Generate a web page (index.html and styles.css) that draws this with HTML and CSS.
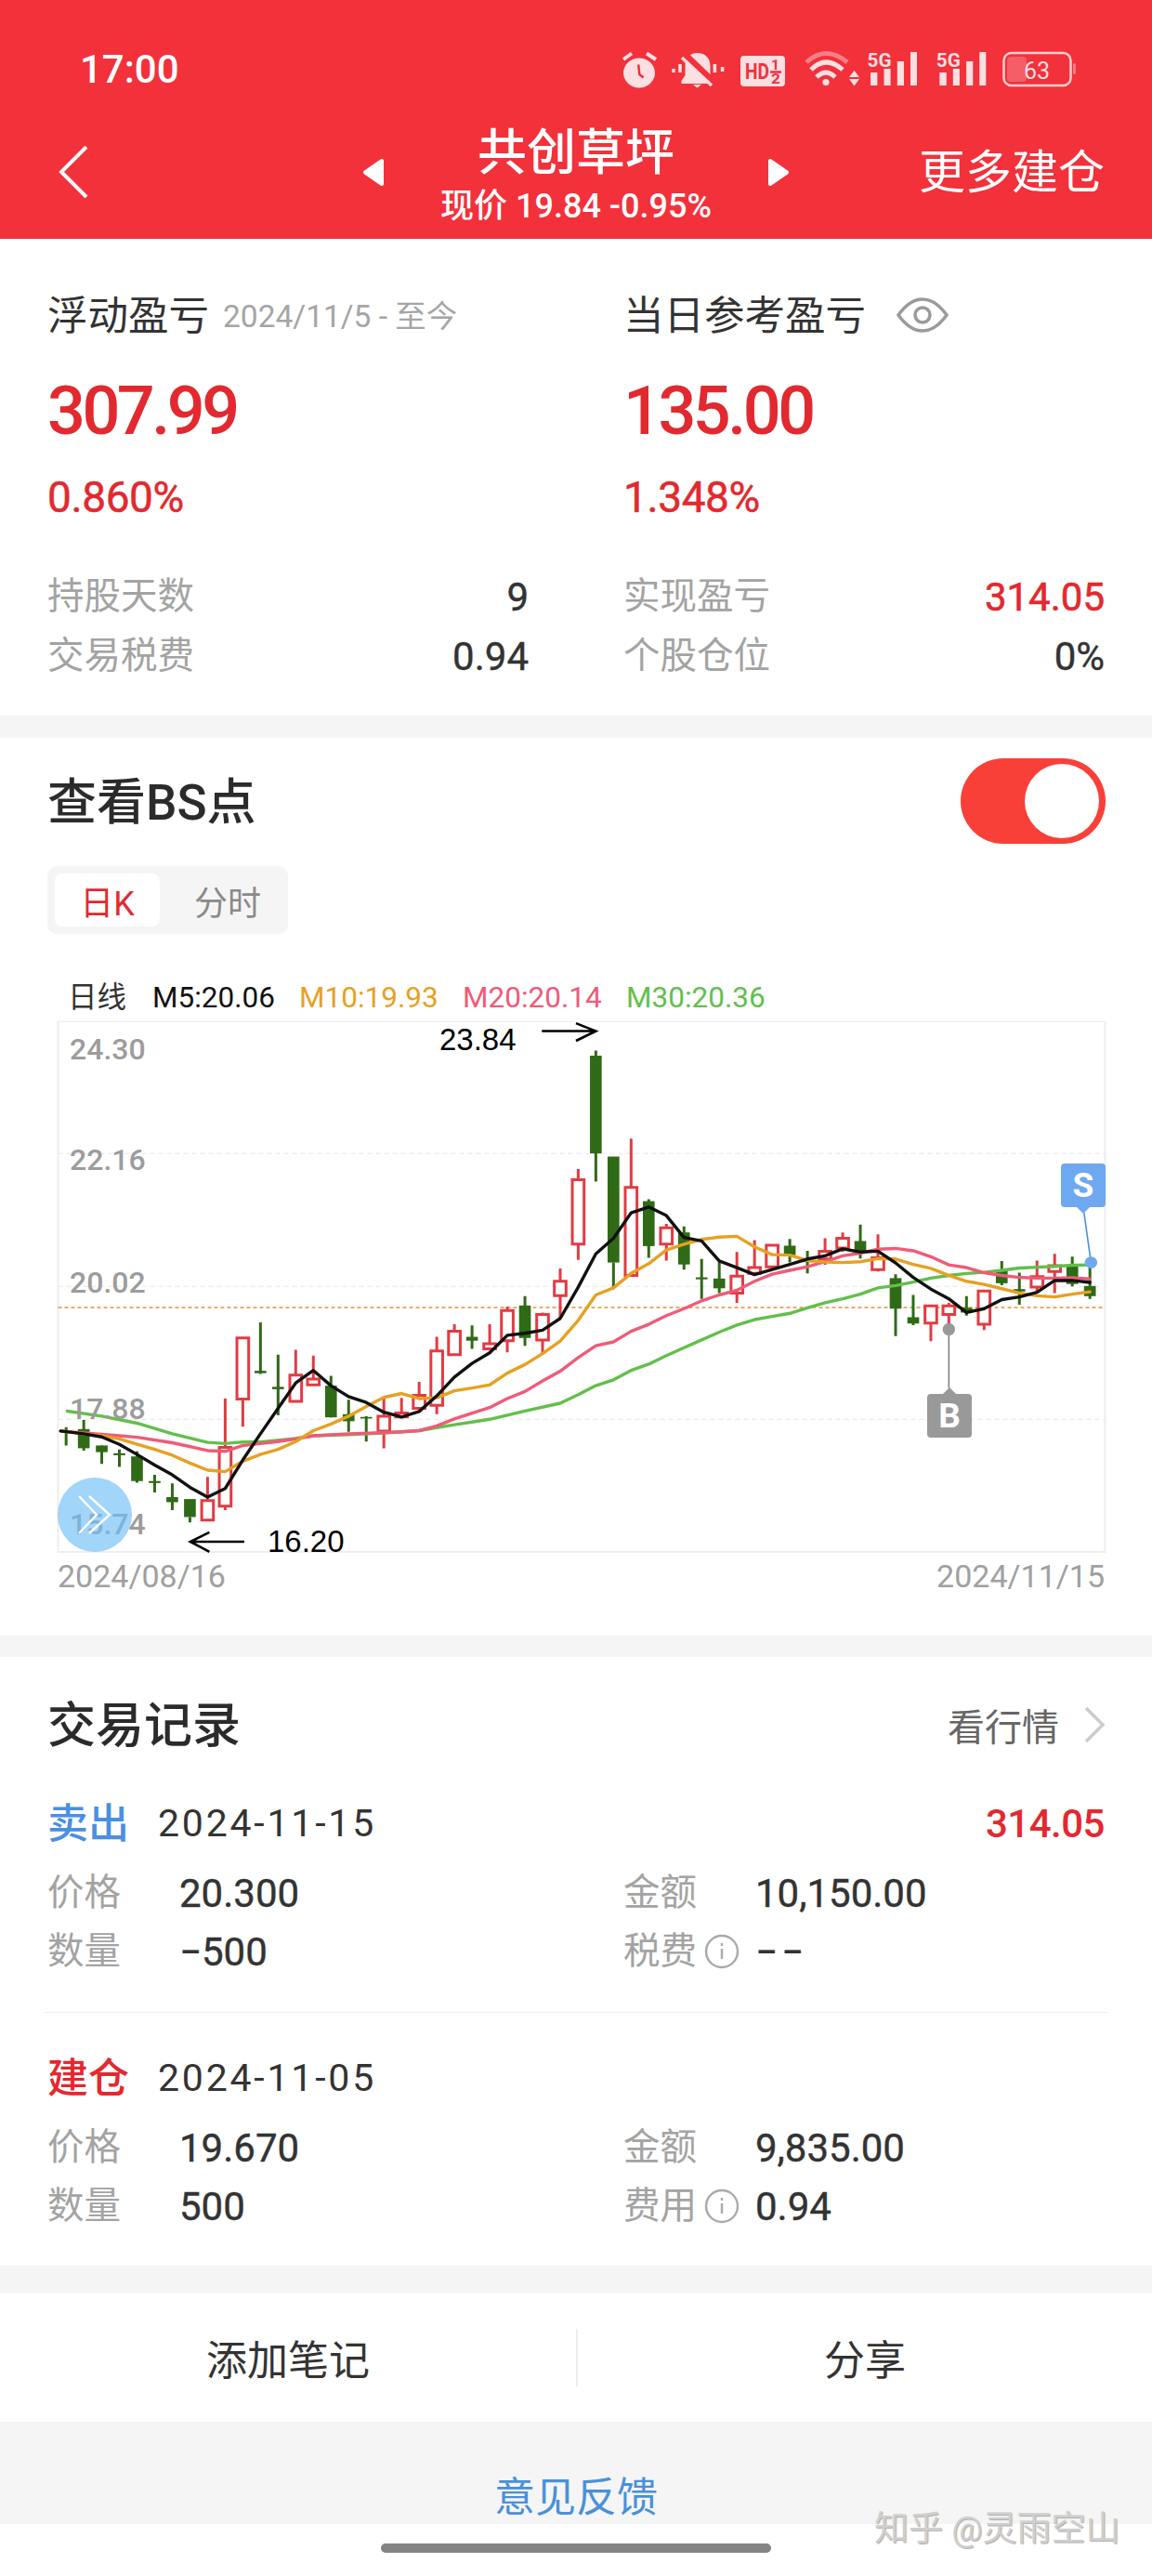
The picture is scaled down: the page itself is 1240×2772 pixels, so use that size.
FILE: index.html
```html
<!DOCTYPE html>
<html lang="zh-CN">
<head>
<meta charset="utf-8">
<title>共创草坪</title>
<link rel="stylesheet" href="styles.css">
</head>
<body>
<header class="header">
  <div class="status">
    <span class="time">17:00</span>
    <svg class="status-icons" viewBox="0 0 490 42" aria-hidden="true">
      <g class="ic-fill"><ellipse cx="19" cy="24.5" rx="17" ry="16"/></g>
      <path class="ic-line" d="M2 10 11 3.5M27 3.5 37 10"/>
      <path class="ic-hand" d="M18.2 15.5 19.3 26 23.5 29.5"/>
      <path class="ic-fill" d="M81.5 3c-8 0-13 6-13 14v10l-4 6v3h35v-3l-4-6V17c0-8-5-14-14-14zM77 37h9l-4.500 3.500z"/>
      <path class="ic-cut" d="M69 6 100 36"/>
      <path class="ic-thin" d="M65 8 97 38M56 20v4M63 15v9M100.400 15v9M108.600 18v5"/>
      <rect class="ic-fill" x="128" y="6" width="48" height="33" rx="4"/>
      <text class="ic-hd" x="133" y="31" textLength="26" lengthAdjust="spacingAndGlyphs">HD</text>
      <text class="ic-frac" x="161" y="21" textLength="9" lengthAdjust="spacingAndGlyphs">1</text>
      <path class="ic-hand" d="M160 23.500h12"/>
      <text class="ic-frac" x="161" y="36" textLength="10" lengthAdjust="spacingAndGlyphs">2</text>
      <path class="ic-arc ic-faded" d="M199 13Q220-6 243 13"/>
      <path class="ic-arc" d="M204 21Q220 5 238 21"/>
      <path class="ic-arc" d="M210 29Q220 19 230 29"/>
      <circle class="ic-fill" cx="220" cy="34.500" r="3.600"/>
      <path class="ic-fill" d="M245 29 250.500 22 256 29zM245 31 250.500 38.500 256 31z"/>
      <text class="ic-5g" x="264.500" y="18" textLength="26" lengthAdjust="spacingAndGlyphs">5G</text>
      <path class="ic-fill" d="M268 24h7.400v14H268zM282.500 20h7.100v18h-7.100zM296.800 12h7.200v26h-7.200zM311 2h7v36h-7z"/>
      <text class="ic-5g" x="338.800" y="18" textLength="26" lengthAdjust="spacingAndGlyphs">5G</text>
      <path class="ic-fill" d="M342.300 24h7.400v14h-7.400zM356.800 20h7.100v18h-7.100zM371.100 12h7.200v26h-7.200zM385.300 2h7v36h-7z"/>
      <rect class="ic-batt" x="411.500" y="3" width="72" height="35" rx="8"/>
      <rect class="ic-level" x="415" y="7" width="21" height="27" rx="4"/>
      <text class="ic-pct" x="447" y="31">63</text>
      <rect class="ic-fill ic-faded" x="486" y="14" width="3" height="12" rx="1.500"/>
    </svg>
  </div>
  <nav class="nav">
    <div class="nav-left">
      <svg class="back" viewBox="0 0 32 56" aria-hidden="true"><path d="M30 1 3 28l27 27"/></svg>
    </div>
    <div class="nav-mid">
      <svg class="tri" viewBox="0 0 24 31" aria-hidden="true"><path d="M21 3v25L3 15.500z"/></svg>
      <div class="nav-title">
        <div class="stock">共创草坪</div>
        <div class="quote">现价 19.84 -0.95%</div>
      </div>
      <svg class="tri" viewBox="0 0 24 31" aria-hidden="true"><path d="M3 3v25l18-12.500z"/></svg>
    </div>
    <div class="nav-right">更多建仓</div>
  </nav>
</header>

<section class="card summary">
  <div class="col">
    <div class="sum-label">浮动盈亏<span class="sum-date">2024/11/5 - 至今</span></div>
    <div class="big">307.99</div>
    <div class="pct">0.860%</div>
    <div class="stats">
      <div class="stat"><span class="muted">持股天数</span><span class="num">9</span></div>
      <div class="stat"><span class="muted">交易税费</span><span class="num">0.94</span></div>
    </div>
  </div>
  <div class="col">
    <div class="sum-label">当日参考盈亏
      <svg class="eye" viewBox="0 0 56 40" aria-hidden="true"><path d="M2 20C12 6 22 3 28 3s16 3 26 17C44 34 34 37 28 37S12 34 2 20z"/><circle cx="28" cy="20" r="8"/></svg>
    </div>
    <div class="big">135.00</div>
    <div class="pct">1.348%</div>
    <div class="stats">
      <div class="stat"><span class="muted">实现盈亏</span><span class="num red">314.05</span></div>
      <div class="stat"><span class="muted">个股仓位</span><span class="num">0%</span></div>
    </div>
  </div>
</section>

<section class="card bs">
  <div class="bs-head">
    <h2 class="h2">查看BS点</h2>
    <div class="toggle"><span class="knob"></span></div>
  </div>
  <div class="tabs"><span class="tab on">日K</span><span class="tab">分时</span></div>
  <div class="legend">
    <span class="lg-dark">日线</span><span class="lg-black">M5:20.06</span><span class="lg-orange">M10:19.93</span><span class="lg-pink">M20:20.14</span><span class="lg-green">M30:20.36</span>
  </div>
  <div class="plot">
    <svg class="kline" viewBox="0 140 3136 1381" preserveAspectRatio="none" aria-hidden="true">
      <rect class="frame" x="158" y="140" width="2850" height="1357"/>
      <path class="grid" d="M158 478H3008M158 818H3008M158 1158H3008"/>
      <path class="cost" d="M158 872H3008"/>
      <g>
        <path class="wick-g" d="M180 1178V1225M228 1160V1238M277 1225V1272M325 1235V1280M373 1240V1320M421 1300V1345M469 1322V1390M517 1408V1422M709 910V1042M757 993V1148M901 1047V1153M949 1108V1190M997 1150V1215M1285 918V978M1429 843V970"/>
        <path class="wick-r" d="M565 1305V1418M613 1105V1390M661 1100V1177M805 980V1112M853 995V1072M1045 1105V1232M1093 1103V1155M1141 1062V1130M1189 947V1145M1237 915V995M1333 915V982M1381 870V987M1477 885V990M1525 772V900M1574 518V750"/>
        <rect class="g" x="164" y="1186" width="32" height="4"/><rect class="g" x="212" y="1183" width="32" height="49"/><rect class="g" x="261" y="1225" width="32" height="17"/><rect class="g" x="309" y="1245" width="32" height="5"/><rect class="g" x="357" y="1253" width="32" height="63"/><rect class="g" x="405" y="1316" width="32" height="5"/><rect class="g" x="453" y="1357" width="32" height="13"/><rect class="g" x="501" y="1362" width="32" height="46"/><rect class="g" x="693" y="1034" width="32" height="6"/><rect class="g" x="741" y="1075" width="32" height="6"/><rect class="g" x="885" y="1072" width="32" height="81"/><rect class="g" x="933" y="1145" width="32" height="18"/><rect class="g" x="981" y="1152" width="32" height="4"/><rect class="g" x="1269" y="947" width="32" height="10"/><rect class="g" x="1413" y="867" width="32" height="83"/>
        <rect class="r" x="549" y="1366" width="32" height="50"/><rect class="r" x="597" y="1230" width="32" height="150"/><rect class="r" x="645" y="950" width="32" height="156"/><rect class="r" x="789" y="1045" width="32" height="67"/><rect class="r" x="837" y="1055" width="32" height="15"/><rect class="r" x="1029" y="1150" width="32" height="38"/><rect class="r" x="1077" y="1142" width="32" height="10"/><rect class="r" x="1125" y="1097" width="32" height="33"/><rect class="r" x="1173" y="983" width="32" height="139"/><rect class="r" x="1221" y="933" width="32" height="60"/><rect class="r" x="1317" y="965" width="32" height="13"/><rect class="r" x="1365" y="880" width="32" height="77"/><rect class="r" x="1461" y="890" width="32" height="65"/><rect class="r" x="1509" y="805" width="32" height="37"/><rect class="r" x="1558" y="545" width="32" height="165"/>
      </g>
      <g transform="translate(1568 0)">
        <path class="wick-g" d="M54 215V550M102 757V825M198 595V745M294 665V775M342 748V850M390 755V835M582 697V757M630 727V785M774 660V747M870 787V945M918 840V917M1063 843V893M1159 753V815M1207 783V865M1351 742V818M1399 770V850"/>
        <path class="wick-r" d="M150 440V790M246 658V752M438 730V860M486 700V785M534 713V775M678 695V763M726 680V730M822 685V780M966 868V958M1015 860V930M1111 828V930M1255 752V830M1303 735V835"/>
        <rect class="g" x="38" y="228" width="32" height="250"/><rect class="g" x="86" y="486" width="32" height="271"/><rect class="g" x="182" y="600" width="32" height="115"/><rect class="g" x="278" y="680" width="32" height="82"/><rect class="g" x="326" y="795" width="32" height="5"/><rect class="g" x="374" y="798" width="32" height="25"/><rect class="g" x="566" y="714" width="32" height="24"/><rect class="g" x="614" y="750" width="32" height="6"/><rect class="g" x="758" y="702" width="32" height="26"/><rect class="g" x="854" y="797" width="32" height="78"/><rect class="g" x="902" y="897" width="32" height="16"/><rect class="g" x="1047" y="873" width="32" height="12"/><rect class="g" x="1143" y="777" width="32" height="33"/><rect class="g" x="1191" y="825" width="32" height="6"/><rect class="g" x="1335" y="765" width="32" height="47"/><rect class="g" x="1383" y="817" width="32" height="26"/>
        <rect class="r" x="134" y="565" width="32" height="225"/><rect class="r" x="230" y="668" width="32" height="42"/><rect class="r" x="422" y="792" width="32" height="43"/><rect class="r" x="470" y="770" width="32" height="15"/><rect class="r" x="518" y="713" width="32" height="55"/><rect class="r" x="662" y="728" width="32" height="20"/><rect class="r" x="710" y="695" width="32" height="25"/><rect class="r" x="806" y="745" width="32" height="30"/><rect class="r" x="950" y="868" width="32" height="44"/><rect class="r" x="999" y="868" width="32" height="22"/><rect class="r" x="1095" y="830" width="32" height="85"/><rect class="r" x="1239" y="793" width="32" height="27"/><rect class="r" x="1287" y="765" width="32" height="15"/>
      </g>
      <polyline class="ma ma30" points="183,1137 277,1150 373,1168 469,1195 565,1217 613,1220 661,1216 709,1216 805,1207 853,1200 949,1197 1045,1193 1141,1187 1237,1172 1333,1158 1429,1137 1525,1117 1574,1095 1622,1072 1670,1057 1718,1033 1766,1017 1814,995 1862,975 1910,955 1958,935 2006,917 2054,903 2102,895 2150,887 2198,873 2246,860 2294,850 2342,838 2390,822 2438,816 2486,807 2534,797 2583,790 2631,785 2679,782 2727,777 2775,771 2823,769 2871,767 2919,764 2967,763"/>
      <polyline class="ma ma20" points="165,1188 228,1193 325,1200 373,1204 469,1218 565,1238 613,1240 661,1225 709,1220 757,1215 805,1208 853,1200 949,1195 1045,1192 1093,1190 1141,1187 1189,1175 1237,1157 1333,1128 1381,1105 1429,1087 1477,1060 1525,1035 1574,1000 1622,970 1670,960 1718,933 1766,915 1814,893 1862,875 1910,855 1958,840 2006,828 2054,805 2102,787 2150,777 2198,768 2246,755 2294,740 2342,733 2390,723 2438,721 2486,727 2534,742 2583,763 2631,770 2679,783 2727,790 2775,795 2823,797 2871,797 2919,796 2967,799"/>
      <polyline class="ma ma10" points="165,1188 228,1195 277,1200 325,1208 373,1222 421,1235 469,1250 517,1270 565,1288 613,1292 661,1265 709,1248 757,1235 805,1215 853,1187 901,1170 949,1150 997,1125 1045,1102 1093,1092 1141,1105 1189,1103 1237,1085 1285,1078 1333,1070 1381,1040 1429,1018 1477,990 1525,958 1574,905 1622,840 1670,822 1718,785 1766,760 1814,725 1862,710 1910,698 1958,692 2006,690 2054,717 2102,737 2150,738 2198,752 2246,756 2294,757 2342,755 2390,747 2438,748 2486,762 2534,772 2583,790 2631,805 2679,813 2727,824 2775,835 2823,842 2871,845 2919,838 2967,832"/>
      <polyline class="ma ma5" points="165,1188 228,1195 277,1203 325,1222 373,1248 421,1275 469,1300 517,1332 565,1357 613,1335 661,1262 709,1195 757,1130 805,1065 853,1033 901,1072 949,1100 997,1115 1045,1140 1093,1152 1141,1138 1189,1098 1237,1050 1285,1015 1333,988 1381,943 1429,938 1477,930 1525,900 1574,820 1622,735 1670,695 1718,630 1766,615 1814,637 1862,693 1910,702 1958,753 2006,770 2054,788 2102,775 2150,762 2198,748 2246,740 2294,722 2342,730 2390,728 2438,758 2486,795 2534,825 2583,850 2631,885 2679,875 2727,852 2775,845 2823,833 2871,803 2919,803 2967,808"/>
      <path class="pin-s" d="M2951 630 2970 757"/>
      <ellipse class="dot-s" cx="2970" cy="757" rx="17" ry="15"/>
      <path class="pin-b" d="M2583 1078V930"/>
      <ellipse class="dot-b" cx="2583" cy="928" rx="17" ry="16"/>
      <path class="arrow" d="M1475 165H1622M1568 145 1622 165 1568 190M665 1471H518M570 1447 518 1471 570 1497"/>
    </svg>
    <span class="ylabel y1">24.30</span>
    <span class="ylabel y2">22.16</span>
    <span class="ylabel y3">20.02</span>
    <span class="ylabel y4">17.88</span>
    <span class="ylabel y5">15.74</span>
    <span class="note note-high">23.84</span>
    <span class="note note-low">16.20</span>
    <span class="badge badge-s">S</span>
    <span class="badge badge-b">B</span>
    <div class="fab">
      <svg class="fab-icon" viewBox="0 0 36 42" aria-hidden="true"><path d="M1 1 20 21 1 41M12 1 34 21 12 41"/></svg>
    </div>
  </div>
  <div class="dates"><span>2024/08/16</span><span>2024/11/15</span></div>
</section>

<section class="card records">
  <div class="rec-title">
    <h2 class="h2">交易记录</h2>
    <div class="more">看行情<svg class="more-arrow" viewBox="0 0 22 40" aria-hidden="true"><path d="M2 2l18 18L2 38"/></svg></div>
  </div>
  <div class="rec rec-first">
    <div class="rec-head">
      <span class="kind blue">卖出</span><span class="rec-date">2024-11-15</span><span class="rec-amt">314.05</span>
    </div>
    <div class="rec-grid">
      <div class="rec-item"><span class="rec-key muted">价格</span><span class="num">20.300</span></div>
      <div class="rec-item"><span class="rec-key muted">金额</span><span class="num">10,150.00</span></div>
      <div class="rec-item"><span class="rec-key muted">数量</span><span class="num">−500</span></div>
      <div class="rec-item"><span class="rec-key muted">税费<svg class="info" viewBox="0 0 38 38" aria-hidden="true"><circle cx="19" cy="19" r="17"/><path d="M19 16v11M19 10v3"/></svg></span><span class="num dashes">−−</span></div>
    </div>
  </div>
  <div class="rec">
    <div class="rec-head">
      <span class="kind red">建仓</span><span class="rec-date">2024-11-05</span>
    </div>
    <div class="rec-grid">
      <div class="rec-item"><span class="rec-key muted">价格</span><span class="num">19.670</span></div>
      <div class="rec-item"><span class="rec-key muted">金额</span><span class="num">9,835.00</span></div>
      <div class="rec-item"><span class="rec-key muted">数量</span><span class="num">500</span></div>
      <div class="rec-item"><span class="rec-key muted">费用<svg class="info" viewBox="0 0 38 38" aria-hidden="true"><circle cx="19" cy="19" r="17"/><path d="M19 16v11M19 10v3"/></svg></span><span class="num">0.94</span></div>
    </div>
  </div>
</section>

<section class="card actions">
  <div class="action">添加笔记</div>
  <div class="action">分享</div>
</section>

<div class="feedback">意见反馈</div>
<div class="home"><span class="home-bar"></span></div>
<div class="watermark">知乎 @灵雨空山</div>
</body>
</html>
```

FILE: styles.css
```css
* { box-sizing: border-box; }
html, body { margin: 0; padding: 0; }
body {
  position: relative;
  width: 1240px;
  height: 2772px;
  overflow: hidden;
  background: #f5f5f5;
  color: #333;
  font-family: Roboto, "Noto Sans CJK SC", sans-serif;
}
h2 { margin: 0; }
svg { display: block; }

/* header */
.header { height: 257px; padding-top: 45px; background: #f2313b; color: #fff; }
.status { display: flex; align-items: center; justify-content: space-between; height: 60px; padding: 0 81px 0 86px; }
.time { font-size: 42px; font-weight: 500; line-height: 60px; }
.status-icons { width: 490px; height: 42px; overflow: visible; }
.ic-fill { fill: #fbdfe1; }
.ic-line { stroke: #fbdfe1; stroke-width: 4; fill: none; }
.ic-hand { stroke: #f2313b; stroke-width: 2.5; fill: none; }
.ic-cut { stroke: #f2313b; stroke-width: 8; fill: none; }
.ic-thin { stroke: #fbdfe1; stroke-width: 3.5; fill: none; }
.ic-hd { fill: #f2313b; font: 700 24px Roboto, sans-serif; }
.ic-frac { fill: #f2313b; font: 700 14px Roboto, sans-serif; }
.ic-arc { stroke: #fbdfe1; stroke-width: 5; fill: none; }
.ic-faded { opacity: .45; }
.ic-5g { fill: #fbdfe1; font: 700 21px Roboto, sans-serif; }
.ic-batt { fill: none; stroke: #fbdfe1; stroke-width: 2.5; opacity: .9; }
.ic-level { fill: #fff; opacity: .22; }
.ic-pct { fill: #fbdfe1; font: 400 25px Roboto, sans-serif; text-anchor: middle; }

.nav { display: grid; grid-template-columns: 1fr auto 1fr; align-items: center; height: 120px; margin-top: 20px; padding: 0 51px; }
.nav-left { padding-left: 12px; }
.back { width: 32px; height: 56px; }
.back path { fill: none; stroke: #fff; stroke-width: 4; }
.nav-mid { display: flex; align-items: center; gap: 60px; }
.tri { width: 24px; height: 31px; }
.tri path { fill: #fff; stroke: #fff; stroke-width: 4; stroke-linejoin: round; }
.nav-title { text-align: center; }
.stock { font-size: 53px; font-weight: 500; line-height: 72px; margin-top: 2px; }
.quote { font-size: 36px; font-weight: 500; line-height: 42px; white-space: nowrap; }
.nav-right { padding-top: 2px; text-align: right; font-size: 50px; line-height: 60px; }

/* cards */
.card { background: #fff; }
.summary { display: grid; grid-template-columns: 518px 518px; column-gap: 102px; height: 513px; padding: 54px 51px 0; margin-bottom: 24px; }
.sum-label { display: flex; align-items: center; height: 50px; font-size: 43.500px; white-space: nowrap; }
.sum-date { margin-left: 15px; margin-top: 3px; font-size: 33.500px; color: #a5a5a5; }
.eye { width: 56px; height: 40px; margin-left: 33px; margin-top: 6px; fill: none; stroke: #9a9a9a; stroke-width: 3.5; }
.big { margin-top: 42px; height: 80px; font-size: 72px; line-height: 80px; font-weight: 500; letter-spacing: -3.500px; color: #e2292f; }
.pct { margin-top: 27px; height: 50px; font-size: 46px; line-height: 50px; font-weight: 400; letter-spacing: -.4px; -webkit-text-stroke: .5px #e2292f; color: #e2292f; }
.stats { margin-top: 50px; }
.stat { display: flex; justify-content: space-between; align-items: center; height: 64px; }
.muted { font-size: 39.500px; line-height: 50px; color: #a3a3a3; }
.num { font-size: 42px; font-weight: 400; -webkit-text-stroke: .4px #333; color: #333; }
.num.red { color: #e2292f; -webkit-text-stroke: .6px #e2292f; }

.bs { height: 966px; margin-bottom: 23px; }
.bs-head { display: flex; justify-content: space-between; align-items: center; padding: 22px 50px 0 51px; }
.h2 { padding-top: 4px; font-size: 53px; font-weight: 500; line-height: 60px; color: #2b2b2b; }
.toggle { display: flex; justify-content: flex-end; align-items: center; width: 156px; height: 92px; padding: 0 7px; border-radius: 46px; background: #f94038; }
.knob { width: 80px; height: 80px; border-radius: 50%; background: #fff; }
.tabs { display: inline-flex; align-items: center; height: 73px; margin: 24px 0 0 51px; padding: 0 8px; border-radius: 10px; background: #f5f5f5; font-size: 36px; color: #8a8a8a; }
.tab { display: flex; align-items: center; justify-content: center; width: 113px; height: 57px; border-radius: 8px; }
.tab + .tab { width: 130px; padding-left: 16px; }
.tab.on { background: #fff; color: #e2292f; }
.legend { display: flex; align-items: center; height: 50px; margin-top: 44px; padding-left: 73px; font-size: 31.500px; line-height: 50px; white-space: nowrap; }
.lg-dark { width: 91px; color: #333; }
.lg-black { width: 158px; color: #111; }
.lg-orange { width: 176px; color: #e6a122; }
.lg-pink { width: 176px; color: #ef5b78; }
.lg-green { color: #62bf4b; }

.plot { position: relative; height: 581px; }
.kline { width: 1240px; height: 581px; }
.kline * { vector-effect: non-scaling-stroke; }
.frame { fill: none; stroke: #eeeeee; stroke-width: 2; }
.grid { fill: none; stroke: #e6e6e6; stroke-width: 1; stroke-dasharray: 5 4; }
.cost { fill: none; stroke: #e78f3a; stroke-width: 1.5; stroke-dasharray: 4 3; }
.wick-g { fill: none; stroke: #2f6a16; stroke-width: 3; }
.wick-r { fill: none; stroke: #e23b42; stroke-width: 3; }
.g { fill: #2f6a16; }
.r { fill: #fff; stroke: #e23b42; stroke-width: 3; }
.ma { fill: none; stroke-width: 3.4; stroke-linejoin: round; stroke-linecap: round; }
.ma5 { stroke: #111; }
.ma10 { stroke: #e6a122; }
.ma20 { stroke: #ef5b78; }
.ma30 { stroke: #62bf4b; }
.pin-s { fill: none; stroke: #4a90e2; stroke-width: 1.6; }
.dot-s { fill: #6ea8f0; }
.pin-b { fill: none; stroke: #808080; stroke-width: 1.6; }
.dot-b { fill: #999; }
.arrow { fill: none; stroke: #000; stroke-width: 2.6; }

.ylabel { position: absolute; left: 75px; font-size: 32px; font-weight: 500; line-height: 40px; color: #9c9c9c; }
.y1 { top: 10px; }
.y2 { top: 129px; }
.y3 { top: 261px; }
.y4 { top: 397px; }
.y5 { top: 521px; }
.note { position: absolute; font-family: "Liberation Sans", sans-serif; font-size: 33px; line-height: 40px; color: #000; }
.note-high { left: 473px; top: 0; }
.note-low { left: 288px; top: 540px; }
.badge { position: absolute; display: flex; align-items: center; justify-content: center; width: 48px; height: 47px; border-radius: 4px; font-size: 37px; font-weight: 700; color: #fff; }
.badge::after { content: ""; position: absolute; left: 17px; border: 7px solid transparent; }
.badge-s { left: 1142px; top: 153px; background: #6ea8f0; }
.badge-s::after { top: 47px; border-top-color: #6ea8f0; }
.badge-b { left: 998px; top: 401px; background: #999; }
.badge-b::after { top: -14px; border-bottom-color: #999; }
.fab { position: absolute; left: 62px; top: 491px; display: flex; align-items: center; justify-content: center; width: 80px; height: 80px; border-radius: 50%; background: rgba(110, 190, 248, .65); }
.fab-icon { width: 36px; height: 42px; fill: none; stroke: #fff; stroke-width: 2.4; }
.dates { display: flex; justify-content: space-between; align-items: center; height: 32px; padding: 0 51px 0 62px; font-size: 34px; color: #a0a0a0; }

/* records */
.records { height: 655px; padding: 45px 51px 0; }
.rec-title { display: flex; justify-content: space-between; align-items: center; height: 60px; }
.records .h2 { font-size: 52px; padding-top: 0; }
.more { display: flex; align-items: center; margin-top: -5px; font-size: 40px; color: #666; }
.more-arrow { width: 22px; height: 40px; margin-left: 27px; fill: none; stroke: #cccccc; stroke-width: 3.5; }
.rec { padding: 40px 0 33px; }
.rec-first { margin: 0 -3px; padding: 44px 3px 33px; border-bottom: 1px solid #eeeeee; }
.rec-head { display: flex; align-items: center; height: 60px; margin-bottom: 14px; }
.kind { width: 119px; font-size: 44px; font-weight: 500; line-height: 54px; margin-top: 1px; }
.blue { color: #4a8fe2; }
.red { color: #e2292f; }
.rec-date { font-size: 41px; letter-spacing: 2.800px; color: #333; }
.rec-amt { margin-left: auto; font-size: 42px; font-weight: 500; letter-spacing: -.5px; color: #e2292f; }
.rec-grid { display: grid; grid-template-columns: 518px 518px; column-gap: 102px; }
.rec-item { display: flex; align-items: center; height: 63px; }
.rec-key { display: flex; align-items: center; width: 142px; margin-top: -2px; }
.info { width: 38px; height: 38px; margin-left: 8px; fill: none; stroke: #aaaaaa; stroke-width: 2.4; }
.dashes { letter-spacing: 4px; }

/* footer */
.actions { display: grid; grid-template-columns: 1fr 1fr; align-items: center; height: 138px; margin-top: 30px; }
.action { display: flex; align-items: center; justify-content: center; height: 62px; font-size: 44px; }
.action + .action { border-left: 2px solid #eeeeee; }
.feedback { height: 110px; padding-top: 57px; background: #f5f5f5; text-align: center; font-size: 44px; line-height: 50px; color: #4a90d9; }
.home { display: flex; justify-content: center; height: 56px; padding-top: 21px; background: #fff; }
.home-bar { width: 420px; height: 10px; border-radius: 5px; background: #848484; }
.watermark { position: absolute; left: 941px; top: 2697px; font-size: 37px; line-height: 50px; white-space: nowrap; color: #cfcfcf; text-shadow: 1px 1px 1px #aaaaaa; }
```
